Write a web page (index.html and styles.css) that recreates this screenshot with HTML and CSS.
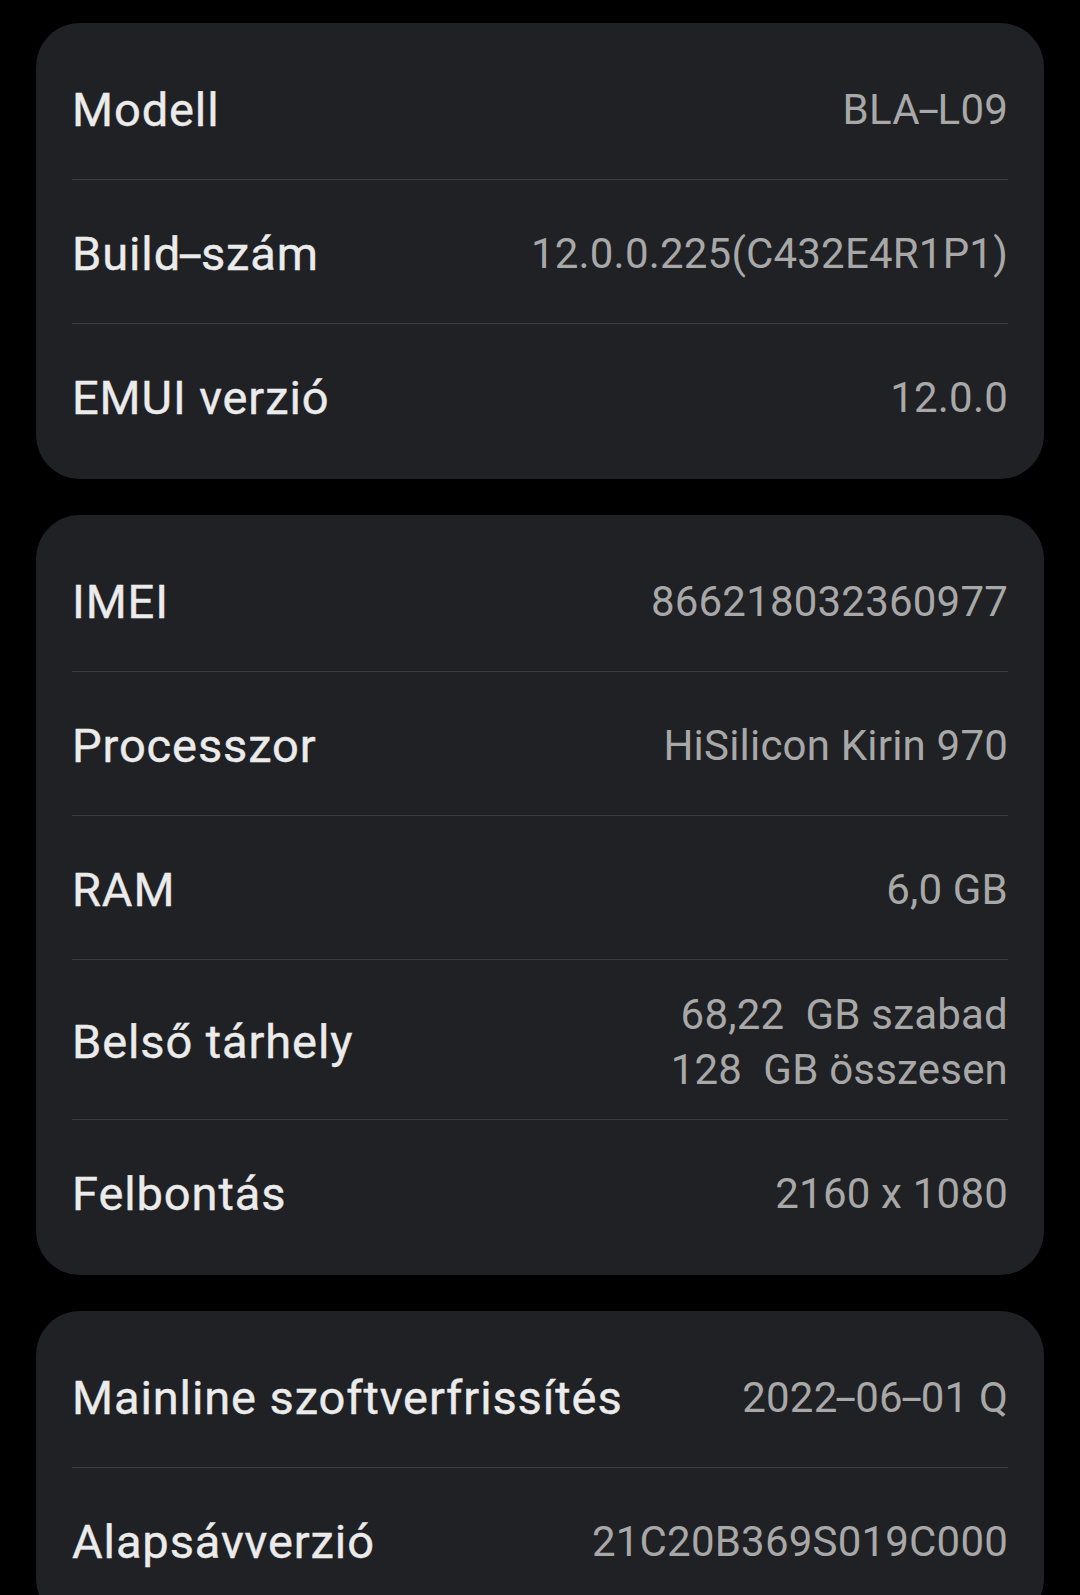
FILE: index.html
```html
<!DOCTYPE html>
<html lang="hu">
<head>
<meta charset="utf-8">
<title>Az eszközről</title>
<link rel="stylesheet" href="styles.css">
</head>
<body>
<main class="page">
  <section class="card">
    <div class="row"><span class="label">Modell</span><span class="value">BLA<span class="hy">-</span>L09</span></div>
    <div class="row"><span class="label">Build<span class="hy">-</span>szám</span><span class="value">12.0.0.225(C432E4R1P1)</span></div>
    <div class="row"><span class="label">EMUI verzió</span><span class="value">12.0.0</span></div>
  </section>
  <section class="card">
    <div class="row"><span class="label">IMEI</span><span class="value">866218032360977</span></div>
    <div class="row"><span class="label">Processzor</span><span class="value">HiSilicon Kirin 970</span></div>
    <div class="row"><span class="label">RAM</span><span class="value">6,0 GB</span></div>
    <div class="row row-tall"><span class="label">Belső tárhely</span><span class="value value-multi"><span class="line">68,22  GB szabad</span><span class="line">128  GB összesen</span></span></div>
    <div class="row"><span class="label">Felbontás</span><span class="value">2160 x 1080</span></div>
  </section>
  <section class="card">
    <div class="row"><span class="label">Mainline szoftverfrissítés</span><span class="value">2022<span class="hy">-</span>06<span class="hy">-</span>01 Q</span></div>
    <div class="row"><span class="label">Alapsávverzió</span><span class="value">21C20B369S019C000</span></div>
  </section>
</main>
</body>
</html>
```

FILE: styles.css
```css
html, body {
  margin: 0;
  padding: 0;
  background: #000;
}

body {
  font-family: Roboto, "Noto Sans", "Liberation Sans", sans-serif;
  -webkit-font-smoothing: antialiased;
}

.page {
  display: flex;
  flex-direction: column;
  gap: 36px;
  padding: 23px 36px 0;
}

.card {
  background: #202124;
  border-radius: 44px;
  padding: 12px 36px;
  display: flex;
  flex-direction: column;
}

.row {
  height: 144px;
  padding-top: 4px;
  display: flex;
  align-items: center;
  justify-content: space-between;
  box-sizing: border-box;
}

.row + .row {
  border-top: 1.5px solid #3b3c3e;
}

.row-tall {
  height: 160px;
}

.label {
  color: #ebebeb;
  font-size: 47px;
  font-weight: 400;
  letter-spacing: 0.9px;
  white-space: nowrap;
  -webkit-text-stroke: 0.4px #ebebeb;
}

.value {
  color: #a8a8a8;
  font-size: 42px;
  font-weight: 400;
  letter-spacing: 0.2px;
  text-align: right;
  white-space: nowrap;
}

.hy {
  display: inline-block;
  margin: 0 3px;
  transform: scaleX(1.8);
}

.value-multi {
  display: flex;
  flex-direction: column;
  align-items: flex-end;
  line-height: 55px;
}

.line {
  white-space: pre;
}
```
